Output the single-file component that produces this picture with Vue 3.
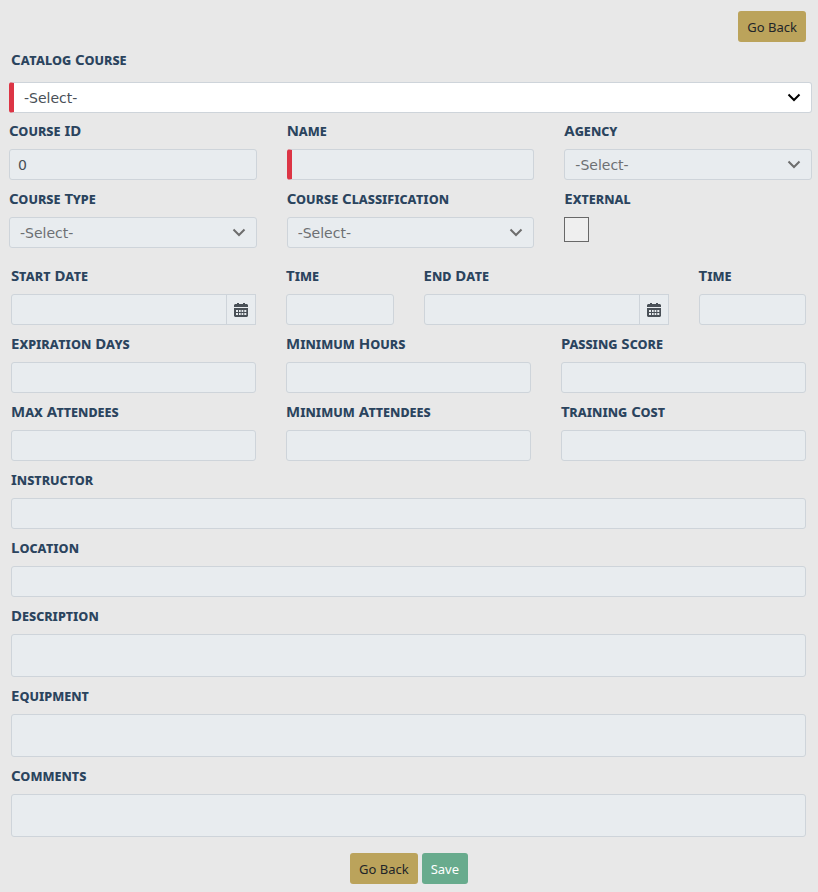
<script setup>
import { ref } from 'vue'

const courseId = ref('0')
const external = ref(false)

const numberFields = [
  { id: 'expiration-days', label: 'Expiration Days' },
  { id: 'minimum-hours', label: 'Minimum Hours' },
  { id: 'passing-score', label: 'Passing Score' },
  { id: 'max-attendees', label: 'Max Attendees' },
  { id: 'minimum-attendees', label: 'Minimum Attendees' },
  { id: 'training-cost', label: 'Training Cost' },
]
const dateFields = [
  { id: 'start', label: 'Start Date' },
  { id: 'end', label: 'End Date' },
]
const lineFields = [
  { id: 'instructor', label: 'Instructor' },
  { id: 'location', label: 'Location' },
]
const textFields = [
  { id: 'description', label: 'Description' },
  { id: 'equipment', label: 'Equipment' },
  { id: 'comments', label: 'Comments' },
]
</script>

<template>
  <form class="page" @submit.prevent>
    <div class="toolbar">
      <button type="button" class="btn btn-gold">Go Back</button>
    </div>

    <section class="catalog">
      <div class="field">
        <label for="catalog">Catalog Course</label>
        <div class="select-wrap">
          <select id="catalog" class="control required"><option>-Select-</option></select>
          <svg class="chevron" viewBox="0 0 16 16"><path d="M2.5 5.5 8 11l5.5-5.5" /></svg>
        </div>
      </div>
    </section>

    <section class="course">
      <div class="field">
        <label for="course-id">Course ID</label>
        <input id="course-id" v-model="courseId" class="control" type="text" readonly />
      </div>
      <div class="field">
        <label for="name">Name</label>
        <input id="name" class="control required" type="text" readonly />
      </div>
      <div class="field">
        <label for="agency">Agency</label>
        <div class="select-wrap">
          <select id="agency" class="control" disabled><option>-Select-</option></select>
          <svg class="chevron muted" viewBox="0 0 16 16"><path d="M2.5 5.5 8 11l5.5-5.5" /></svg>
        </div>
      </div>
      <div class="field">
        <label for="type">Course Type</label>
        <div class="select-wrap">
          <select id="type" class="control" disabled><option>-Select-</option></select>
          <svg class="chevron muted" viewBox="0 0 16 16"><path d="M2.5 5.5 8 11l5.5-5.5" /></svg>
        </div>
      </div>
      <div class="field">
        <label for="classification">Course Classification</label>
        <div class="select-wrap">
          <select id="classification" class="control" disabled><option>-Select-</option></select>
          <svg class="chevron muted" viewBox="0 0 16 16"><path d="M2.5 5.5 8 11l5.5-5.5" /></svg>
        </div>
      </div>
      <div class="field">
        <label for="external">External</label>
        <input id="external" v-model="external" class="check" type="checkbox" />
      </div>
    </section>

    <section class="details">
      <template v-for="d in dateFields" :key="d.id">
        <div class="field third">
          <label :for="d.id + '-date'">{{ d.label }}</label>
          <div class="date-group">
            <input :id="d.id + '-date'" class="control" type="text" readonly />
            <button type="button" class="calendar" :aria-label="'Choose ' + d.label">
              <svg viewBox="0 0 14 14">
                <path fill-rule="evenodd" d="M3 0h2v1h4V0h2v1h2l1 1v2H0V2l1-1h2zM0 5h14v8l-1 1H1l-1-1zM2 7v2h2V7zM5 7v2h1.700V7zM7.600 7v2h1.700V7zM10.300 7v2h2V7zM2 10v2h2v-2zM5 10v2h1.700v-2zM7.600 10v2h1.700v-2zM10.300 10v2h2v-2z" />
              </svg>
            </button>
          </div>
        </div>
        <div class="field sixth">
          <label :for="d.id + '-time'">Time</label>
          <input :id="d.id + '-time'" class="control" type="text" readonly />
        </div>
      </template>
      <div v-for="f in numberFields" :key="f.id" class="field third">
        <label :for="f.id">{{ f.label }}</label>
        <input :id="f.id" class="control" type="text" readonly />
      </div>
      <div v-for="f in lineFields" :key="f.id" class="field full">
        <label :for="f.id">{{ f.label }}</label>
        <input :id="f.id" class="control" type="text" readonly />
      </div>
      <div v-for="f in textFields" :key="f.id" class="field full">
        <label :for="f.id">{{ f.label }}</label>
        <textarea :id="f.id" class="control area" readonly></textarea>
      </div>
    </section>

    <div class="actions">
      <button type="button" class="btn btn-gold">Go Back</button>
      <button type="submit" class="btn btn-green">Save</button>
    </div>
  </form>
</template>

<style>
body {
  background: #e8e8e8;
}
</style>

<style scoped>
.page {
  font-family: "Noto Sans", "Liberation Sans", sans-serif;
  font-size: 14px;
  color: #495057;
  padding: 11px 0 8px;
}
.toolbar {
  display: flex;
  justify-content: flex-end;
  padding: 0 12px 0 11px;
}
.btn {
  height: 31px;
  padding: 2px 9px 0;
  border: 0;
  border-radius: 3px;
  font-family: "Noto Sans", "Open Sans", sans-serif;
  font-size: 13px;
  line-height: 21px;
}
.btn-gold {
  background: #bba35b;
  color: #212529;
}
.btn-green {
  background: #68ab8d;
  color: #fff;
}
.course,
.details {
  display: grid;
  gap: 1px 30px;
}
.catalog,
.course {
  padding: 0 6px 0 9px;
}
.course {
  grid-template-columns: repeat(3, minmax(0, 1fr));
}
.details {
  grid-template-columns: repeat(12, minmax(0, 1fr));
  padding: 10px 12px 0 11px;
}
.full {
  grid-column: 1 / -1;
}
.third {
  grid-column: span 4;
}
.sixth {
  grid-column: span 2;
}
.field {
  display: flex;
  flex-direction: column;
  align-items: stretch;
}
.field label {
  padding: 5px 0 6px;
  font-size: 15px;
  font-weight: 700;
  font-variant: small-caps;
  line-height: 25px;
  color: #2b445e;
  white-space: nowrap;
}
.catalog label {
  padding: 5px 2px 10px;
}
.control {
  box-sizing: border-box;
  display: block;
  width: 100%;
  min-width: 0;
  height: 31px;
  margin: 0;
  padding: 0 8px;
  border: 1px solid #ced4da;
  border-radius: 3px;
  outline: 0;
  background: #e8ecef;
  color: #495057;
  font-family: "DejaVu Sans", Verdana, sans-serif;
  font-size: 14px;
  line-height: 21px;
  resize: none;
}
.select-wrap {
  position: relative;
}
select.control {
  appearance: none;
  padding: 1px 32px 0 10px;
  opacity: 1;
}
select.control:disabled {
  color: #6d7073;
}
select.required {
  background: #fff;
}
.required {
  border-left: 5px solid #dc3545;
}
.chevron {
  position: absolute;
  top: 7px;
  right: 10px;
  width: 16px;
  height: 16px;
  fill: none;
  stroke: #000;
  stroke-width: 2;
  pointer-events: none;
}
.chevron.muted {
  stroke: #6d6d6d;
}
.check {
  appearance: none;
  box-sizing: border-box;
  width: 25px;
  height: 25px;
  margin: 0;
  border: 1px solid #686868;
  background: #efefef;
}
.check:checked {
  background: #2b445e;
}
.date-group {
  display: flex;
}
.date-group .control {
  border-radius: 3px 0 0 3px;
}
.calendar {
  box-sizing: border-box;
  display: flex;
  flex: none;
  align-items: center;
  justify-content: center;
  width: 30px;
  height: 31px;
  margin-left: -1px;
  padding: 0;
  border: 1px solid #ced4da;
  background: #e8ecef;
}
.calendar svg {
  width: 14px;
  height: 14px;
  fill: #495057;
}
.area {
  height: 43px;
}
.actions {
  display: flex;
  justify-content: center;
  gap: 4px;
  padding-top: 16px;
}
</style>
